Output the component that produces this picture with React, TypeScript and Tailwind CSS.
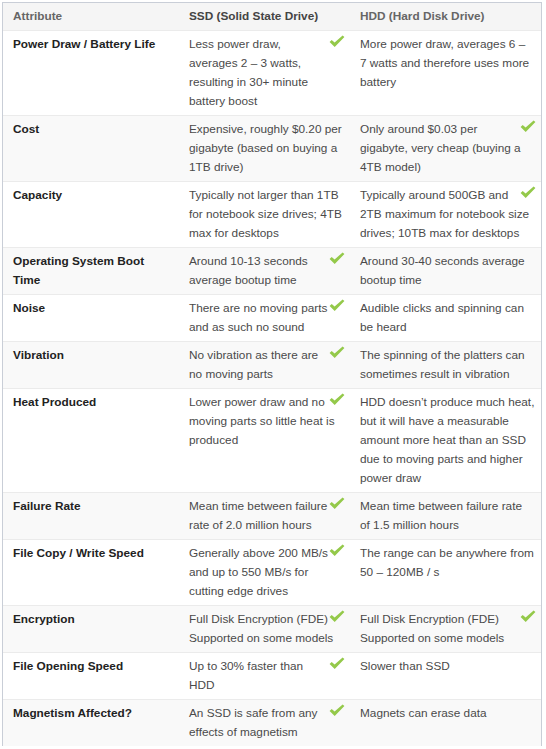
import React from "react";

type Row = {
  attr: string;
  ssd: string;
  hdd: string;
  ssdCheck?: boolean;
  hddCheck?: boolean;
};

const rows: Row[] = [
  {
    attr: "Power Draw / Battery Life",
    ssd: "Less power draw, averages 2 – 3 watts, resulting in 30+ minute battery boost",
    hdd: "More power draw, averages 6 – 7 watts and therefore uses more battery",
    ssdCheck: true,
  },
  {
    attr: "Cost",
    ssd: "Expensive, roughly $0.20 per gigabyte (based on buying a 1TB drive)",
    hdd: "Only around $0.03 per gigabyte, very cheap (buying a 4TB model)",
    hddCheck: true,
  },
  {
    attr: "Capacity",
    ssd: "Typically not larger than 1TB for notebook size drives; 4TB max for desktops",
    hdd: "Typically around 500GB and 2TB maximum for notebook size drives; 10TB max for desktops",
    hddCheck: true,
  },
  {
    attr: "Operating System Boot Time",
    ssd: "Around 10-13 seconds average bootup time",
    hdd: "Around 30-40 seconds average bootup time",
    ssdCheck: true,
  },
  {
    attr: "Noise",
    ssd: "There are no moving parts and as such no sound",
    hdd: "Audible clicks and spinning can be heard",
    ssdCheck: true,
  },
  {
    attr: "Vibration",
    ssd: "No vibration as there are no moving parts",
    hdd: "The spinning of the platters can sometimes result in vibration",
    ssdCheck: true,
  },
  {
    attr: "Heat Produced",
    ssd: "Lower power draw and no moving parts so little heat is produced",
    hdd: "HDD doesn’t produce much heat, but it will have a measurable amount more heat than an SSD due to moving parts and higher power draw",
    ssdCheck: true,
  },
  {
    attr: "Failure Rate",
    ssd: "Mean time between failure rate of 2.0 million hours",
    hdd: "Mean time between failure rate of 1.5 million hours",
    ssdCheck: true,
  },
  {
    attr: "File Copy / Write Speed",
    ssd: "Generally above 200 MB/s and up to 550 MB/s for cutting edge drives",
    hdd: "The range can be anywhere from 50 – 120MB / s",
    ssdCheck: true,
  },
  {
    attr: "Encryption",
    ssd: "Full Disk Encryption (FDE) Supported on some models",
    hdd: "Full Disk Encryption (FDE) Supported on some models",
    ssdCheck: true,
    hddCheck: true,
  },
  {
    attr: "File Opening Speed",
    ssd: "Up to 30% faster than HDD",
    hdd: "Slower than SSD",
    ssdCheck: true,
  },
  {
    attr: "Magnetism Affected?",
    ssd: "An SSD is safe from any effects of magnetism",
    hdd: "Magnets can erase data",
    ssdCheck: true,
  },
];

function Check() {
  return (
    <span className="float-right w-[14px] h-[19px] relative">
      <svg
        width="16"
        height="13"
        viewBox="0 0 16 13"
        className="absolute right-[-1px] top-[0px]"
      >
        <path
          d="M0.6 6.9 L2.7 4.9 L5.6 7.6 L13.6 0.4 L15.4 2.1 L5.7 11.9 Z"
          fill="#94c94a"
        />
      </svg>
    </span>
  );
}

export default function App() {
  return (
    <div
      className="bg-white min-h-[749px] pt-[2px] pl-[2px]"
      style={{ fontFamily: "'Liberation Sans', Arial, sans-serif" }}
    >
      <div className="w-[540px] border border-b-0 border-[#c9ced7] text-[11.8px] leading-[19px]">
        <div className="grid grid-cols-[176px_171px_191px] bg-[#f5f5f5]">
          <div className="pl-[10px] pr-[20px] pt-[4px] pb-[4px] font-bold text-[#666]">
            Attribute
          </div>
          <div className="pl-[10px] pr-[6px] pt-[4px] pb-[4px] font-bold text-[#444]">
            SSD (Solid State Drive)
          </div>
          <div className="pl-[10px] pr-[6px] pt-[4px] pb-[4px] font-bold text-[#666]">
            HDD (Hard Disk Drive)
          </div>
        </div>
        {rows.map((r, i) => (
          <div
            key={r.attr}
            className={
              "grid grid-cols-[176px_171px_191px] border-t border-[#ebebeb] " +
              (i % 2 === 1 ? "bg-[#f9f9f9]" : "bg-white")
            }
          >
            <div className="pl-[10px] pr-[20px] pt-[4px] pb-[4px] font-bold text-[#222]">
              {r.attr}
            </div>
            <div className="pl-[10px] pr-[6px] pt-[4px] pb-[4px] text-[#4a4a4a]">
              {r.ssdCheck && <Check />}
              {r.ssd}
            </div>
            <div className="pl-[10px] pr-[6px] pt-[4px] pb-[4px] text-[#4a4a4a]">
              {r.hddCheck && <Check />}
              {r.hdd}
            </div>
          </div>
        ))}
      </div>
    </div>
  );
}
